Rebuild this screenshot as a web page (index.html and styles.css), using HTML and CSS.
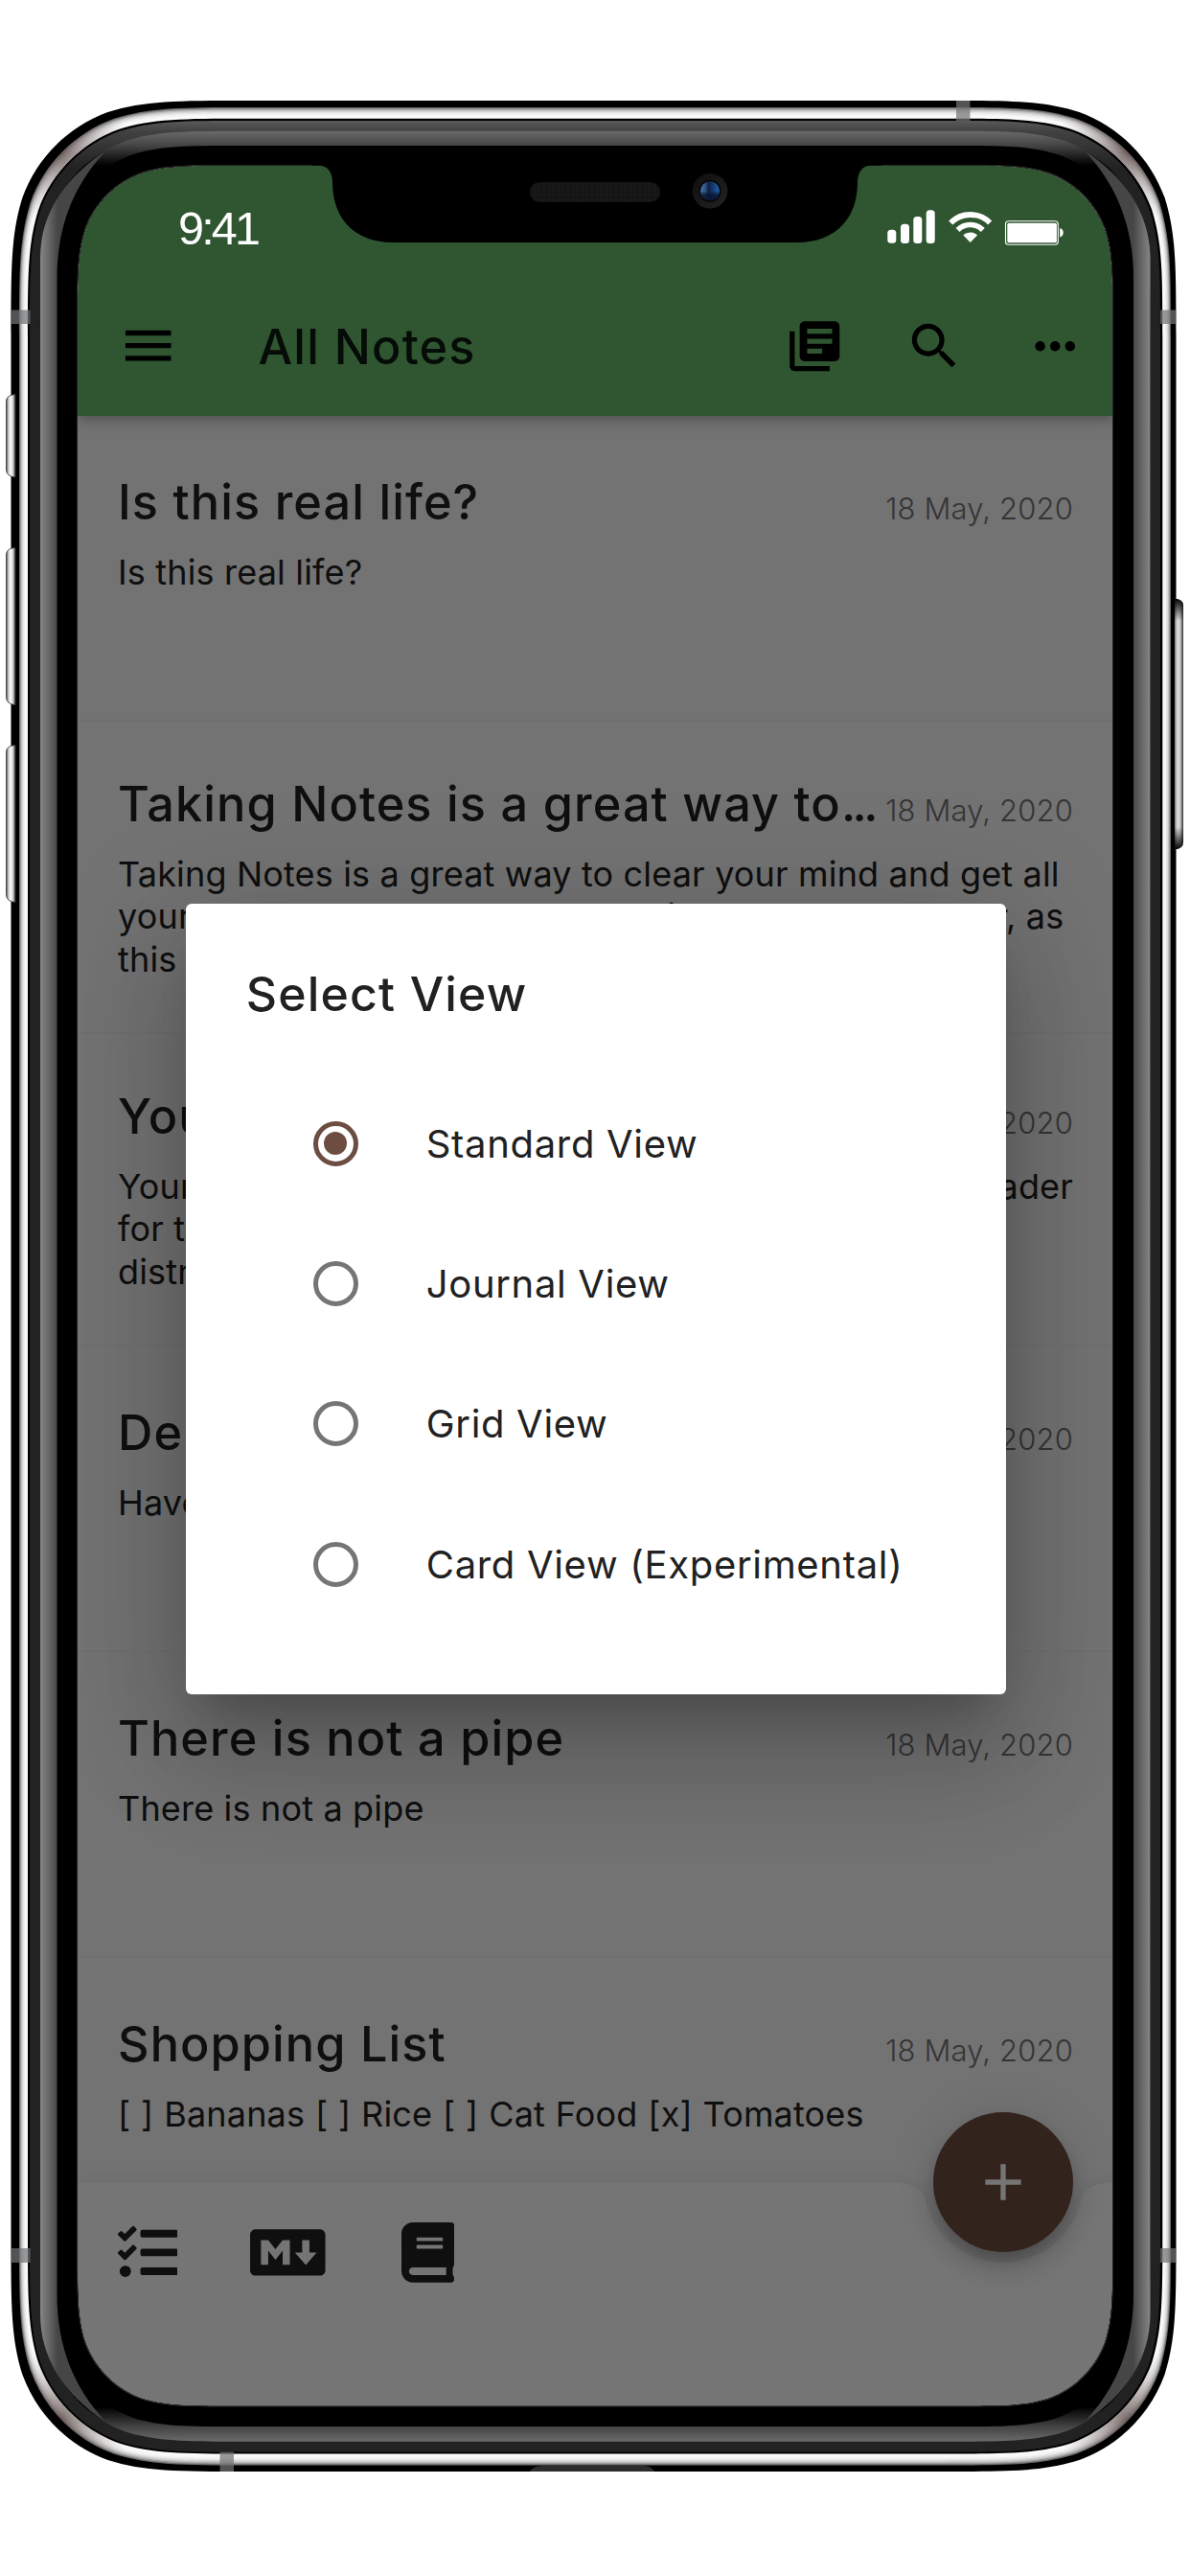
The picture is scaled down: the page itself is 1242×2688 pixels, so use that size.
FILE: index.html
```html
<!DOCTYPE html>
<html lang="en">
<head>
<meta charset="utf-8">
<title>All Notes</title>
<link rel="stylesheet" href="styles.css">
</head>
<body>
<div class="phone">
  <main class="screen">
    <header class="appbar">
      <div class="toolbar">
        <svg class="icon menu" viewBox="0 0 24 24"><path d="M3 18h18v-2H3v2zm0-5h18v-2H3v2zm0-7v2h18V6H3z"/></svg>
        <h1 class="heading">All Notes</h1>
        <svg class="icon" viewBox="0 0 24 24"><path d="M4 6H2v14c0 1.1.9 2 2 2h14v-2H4V6zm16-4H8c-1.1 0-2 .9-2 2v12c0 1.1.9 2 2 2h12c1.1 0 2-.9 2-2V4c0-1.1-.9-2-2-2zm-1 9H9V9h10v2zm-4 4H9v-2h6v2zm4-8H9V5h10v2z"/></svg>
        <svg class="icon" viewBox="0 0 24 24"><path d="M15.5 14h-.79l-.28-.27C15.41 12.59 16 11.11 16 9.5 16 5.91 13.09 3 9.5 3S3 5.91 3 9.5 5.91 16 9.5 16c1.61 0 3.09-.59 4.23-1.57l.27.28v.79l5 4.99L20.49 19l-4.99-5zm-6 0C7.01 14 5 11.99 5 9.5S7.01 5 9.5 5 14 7.01 14 9.5 11.99 14 9.5 14z"/></svg>
        <svg class="icon" viewBox="0 0 24 24"><path d="M6 10c-1.1 0-2 .9-2 2s.9 2 2 2 2-.9 2-2-.9-2-2-2zm12 0c-1.1 0-2 .9-2 2s.9 2 2 2 2-.9 2-2-.9-2-2-2zm-6 0c-1.1 0-2 .9-2 2s.9 2 2 2 2-.9 2-2-.9-2-2-2z"/></svg>
      </div>
    </header>
    <div class="notes">
      <article class="note">
        <div class="note-head"><h2 class="note-title">Is this real life?</h2><time class="date">18 May, 2020</time></div>
        <p class="note-body">Is this real life?</p>
      </article>
      <article class="note long">
        <div class="note-head"><h2 class="note-title">Taking Notes is a great way to<span class="dots">...</span></h2><time class="date">18 May, 2020</time></div>
        <p class="note-body">Taking Notes is a great way to clear your mind and get all<br>your thoughts down but as especially small goals over, as<br>this helps</p>
      </article>
      <article class="note long">
        <div class="note-head"><h2 class="note-title">Your Notes</h2><time class="date">18 May, 2020</time></div>
        <p class="note-body spread"><span>Your notes</span><span>reader</span></p>
        <p class="note-body tail">for the<br>distraction</p>
      </article>
      <article class="note">
        <div class="note-head"><h2 class="note-title">Demo</h2><time class="date">18 May, 2020</time></div>
        <p class="note-body">Have a day</p>
      </article>
      <article class="note">
        <div class="note-head"><h2 class="note-title">There is not a pipe</h2><time class="date">18 May, 2020</time></div>
        <p class="note-body">There is not a pipe</p>
      </article>
      <article class="note">
        <div class="note-head"><h2 class="note-title">Shopping List</h2><time class="date">18 May, 2020</time></div>
        <p class="note-body checklist">[ ] Bananas [ ] Rice [ ] Cat Food [x] Tomatoes</p>
      </article>
    </div>
    <footer class="bottombar">
      <svg class="bar-shape" viewBox="0 0 1081 234"><path d="M0 0H845C870 0 880 6 884 16A83.5 83.5 0 0 0 1048 16C1052 6 1062 0 1087 0V234H0Z"/></svg>
      <svg class="tool tool-list" viewBox="0 0 512 512"><path d="M139.61 35.5a12 12 0 0 0-17 0L58.93 98.81l-22.7-22.12a12 12 0 0 0-17 0L3.53 92.41a12 12 0 0 0 0 17l47.59 47.4a12.78 12.78 0 0 0 17.61 0l15.59-15.62L156.52 69a12.09 12.09 0 0 0 .09-17zm0 159.19a12 12 0 0 0-17 0l-63.68 63.72-22.7-22.1a12 12 0 0 0-17 0L3.53 252a12 12 0 0 0 0 17L51 316.5a12.77 12.77 0 0 0 17.6 0l15.7-15.69 72.2-72.22a12 12 0 0 0 .09-16.9zM64 368c-26.49 0-48.59 21.5-48.59 48S37.53 464 64 464a48 48 0 0 0 0-96zm432 16H208a16 16 0 0 0-16 16v32a16 16 0 0 0 16 16h288a16 16 0 0 0 16-16v-32a16 16 0 0 0-16-16zm0-320H208a16 16 0 0 0-16 16v32a16 16 0 0 0 16 16h288a16 16 0 0 0 16-16V80a16 16 0 0 0-16-16zm0 160H208a16 16 0 0 0-16 16v32a16 16 0 0 0 16 16h288a16 16 0 0 0 16-16v-32a16 16 0 0 0-16-16z"/></svg>
      <svg class="tool tool-md" viewBox="0 0 640 512"><path d="M593.8 59.1H46.2C20.7 59.1 0 79.8 0 105.2v301.5c0 25.5 20.7 46.2 46.2 46.2h547.7c25.5 0 46.2-20.7 46.1-46.1V105.2c0-25.4-20.7-46.1-46.2-46.1zM338.5 360.6H277v-120l-61.5 76.9-61.5-76.9v120H92.3V151.4h61.5l61.5 76.9 61.5-76.9h61.5v209.2zm135.3 3.1L381.5 256H443V151.4h61.5V256H566z"/></svg>
      <svg class="tool tool-book" viewBox="0 0 448 512"><path d="M448 360V24c0-13.3-10.7-24-24-24H96C43 0 0 43 0 96v320c0 53 43 96 96 96h328c13.3 0 24-10.7 24-24v-16c0-7.5-3.5-14.3-8.9-18.7-4.2-15.4-4.2-59.3 0-74.7 5.4-4.3 8.9-11.1 8.9-18.6zM128 134c0-3.3 2.7-6 6-6h212c3.3 0 6 2.7 6 6v20c0 3.3-2.7 6-6 6H134c-3.3 0-6-2.7-6-6v-20zm0 64c0-3.3 2.7-6 6-6h212c3.3 0 6 2.7 6 6v20c0 3.3-2.7 6-6 6H134c-3.3 0-6-2.7-6-6v-20zm253.4 250H96c-17.7 0-32-14.3-32-32 0-17.6 14.4-32 32-32h285.4c-1.9 17.1-1.9 46.9 0 64z"/></svg>
      <button class="fab" aria-label="New note"><svg viewBox="0 0 24 24"><path d="M19 13h-6v6h-2v-6H5v-2h6V5h2v6h6v2z"/></svg></button>
    </footer>

    <div class="scrim">
      <section class="dialog">
        <h2 class="dialog-title">Select View</h2>
        <ul class="options">
          <li class="option"><span class="radio on"></span>Standard View</li>
          <li class="option"><span class="radio"></span>Journal View</li>
          <li class="option"><span class="radio"></span>Grid View</li>
          <li class="option"><span class="radio"></span>Card View (Experimental)</li>
        </ul>
      </section>
    </div>

    <div class="status">
      <span class="clock">9:41</span>
      <svg class="status-icons" viewBox="0 0 190 50">
        <g fill="#fff">
          <rect x="5.3" y="29.7" width="9" height="14" rx="3.5"/>
          <rect x="19" y="23.7" width="9" height="20.3" rx="3.5"/>
          <rect x="32.3" y="16" width="9" height="28" rx="3.5"/>
          <rect x="45.7" y="9.3" width="9" height="34.7" rx="3.5"/>
          <path d="M91.7 43L84.2 35.2A11.5 11.5 0 0 1 99.2 35.2Z"/>
          <rect x="130.3" y="22.7" width="51.6" height="20.6" rx="1.5"/>
          <path d="M185.2 28q3.5 1 3.5 4.7t-3.5 4.7z"/>
        </g>
        <g fill="none" stroke="#fff">
          <path stroke-width="5.8" d="M71.2 22.5A29 29 0 0 1 112.2 22.5"/>
          <path stroke-width="5.6" d="M78.6 29.9A18.5 18.5 0 0 1 104.8 29.9"/>
          <rect x="128.5" y="20.8" width="54.8" height="24.4" rx="3" stroke-width="1.1"/>
        </g>
      </svg>
    </div>
  </main>

  <svg class="frame" viewBox="0 0 1242 2688">
    <defs>
      <linearGradient id="btnL"><stop offset="0" stop-color="#333"/><stop offset=".2" stop-color="#bbb"/><stop offset=".5" stop-color="#fff"/><stop offset=".8" stop-color="#bbb"/><stop offset="1" stop-color="#333"/></linearGradient>
      <linearGradient id="btnR"><stop offset="0" stop-color="#777"/><stop offset=".3" stop-color="#ddd"/><stop offset=".6" stop-color="#d0d0d0"/><stop offset=".85" stop-color="#777"/><stop offset="1" stop-color="#222"/></linearGradient>
      <linearGradient id="btnEnds" x1="0" y1="0" x2="0" y2="1"><stop offset="0" stop-color="#000"/><stop offset=".09" stop-color="#000" stop-opacity="0"/><stop offset=".91" stop-color="#000" stop-opacity="0"/><stop offset="1" stop-color="#000"/></linearGradient>
      <linearGradient id="lip" gradientUnits="userSpaceOnUse" x1="0" y1="126" x2="0" y2="175"><stop offset="0" stop-color="#5a5a5a"/><stop offset=".22" stop-color="#424242"/><stop offset="1" stop-color="#222"/></linearGradient>
      <linearGradient id="bezel" gradientUnits="userSpaceOnUse" x1="0" y1="136.7" x2="0" y2="2547.7"><stop offset="0" stop-color="#6a6a6a"/><stop offset=".0063" stop-color="#444"/><stop offset=".015" stop-color="#000"/><stop offset=".985" stop-color="#000"/><stop offset=".9937" stop-color="#444"/><stop offset="1" stop-color="#6a6a6a"/></linearGradient>
      <linearGradient id="side" gradientUnits="userSpaceOnUse" x1="42" y1="0" x2="60" y2="0"><stop offset="0" stop-color="#868686"/><stop offset="1" stop-color="#464646"/></linearGradient>
      <radialGradient id="tint"><stop offset="0" stop-color="#665654" stop-opacity=".85"/><stop offset="1" stop-color="#a09896" stop-opacity="0"/></radialGradient>
      <linearGradient id="lens"><stop offset="0" stop-color="#4675ad"/><stop offset=".25" stop-color="#2f5488"/><stop offset=".42" stop-color="#13213f"/><stop offset=".6" stop-color="#14336a"/><stop offset="1" stop-color="#1f66aa"/></linearGradient>
      <linearGradient id="lens-shade" x1="0" y1="0" x2="0" y2="1"><stop offset=".5" stop-color="#0b1330" stop-opacity="0"/><stop offset=".7" stop-color="#0b1330" stop-opacity=".8"/><stop offset="1" stop-color="#0b1330" stop-opacity=".9"/></linearGradient>
      <linearGradient id="lens-rim" x1="0" y1="0" x2="1" y2="1"><stop offset="0" stop-color="#0e0e0e"/><stop offset="1" stop-color="#232323"/></linearGradient>
      <pattern id="mesh" width="5" height="5" patternUnits="userSpaceOnUse"><rect width="5" height="5" fill="#181818"/><path d="M0 0H5M0 0V5" stroke="#0f0f0f"/></pattern>
      <path id="crescent" d="M42 270C42 225 66 186 110 158C78 192 59.5 235 59.5 290V2394.4C59.5 2449.4 78 2492.4 110 2526.4C66 2498.4 42 2459.4 42 2414.4Z"/>
      <clipPath id="metal"><path id="metal-shape" clip-rule="evenodd"/></clipPath>
    </defs>
    <g id="shell"></g>
    <use href="#crescent" fill="url(#side)"/>
    <use href="#crescent" fill="url(#side)" transform="matrix(-1 0 0 1 1242.5 0)"/>
    <g clip-path="url(#metal)" fill="url(#tint)">
      <ellipse cx="62" cy="158" rx="75" ry="75"/><ellipse cx="1178" cy="158" rx="75" ry="75"/>
      <ellipse cx="62" cy="2526" rx="75" ry="75"/><ellipse cx="1178" cy="2526" rx="75" ry="75"/>
    </g>
    <path d="M325 165V172.7H333C342 172.7 347 180 347 190C347 228 370 253 410 253H832C872 253 895 228 895 190C895 180 900 172.7 909 172.7H920V165Z"/>
    <rect x="553" y="190" width="136" height="21" rx="10.5" fill="url(#mesh)"/>
    <circle cx="741" cy="199.3" r="18.3" fill="url(#lens-rim)"/>
    <circle cx="741" cy="199.3" r="11.5" fill="#070707"/>
    <circle cx="741" cy="199.3" r="10" fill="url(#lens)"/>
    <circle cx="741" cy="199.3" r="10" fill="url(#lens-shade)"/>
    <g fill="#717375" fill-opacity=".72">
      <rect x="11.5" y="323.5" width="20" height="14.5"/><rect x="1211" y="323.5" width="16.5" height="14.5"/>
      <rect x="11.5" y="2346" width="20" height="15"/><rect x="1211" y="2346" width="16.5" height="15"/>
      <rect x="998" y="105" width="14.5" height="21"/><rect x="229.5" y="2558.5" width="14.5" height="20.5"/>
    </g>
    <path d="M553 2579Q556 2573 566 2573H672Q680 2573 683 2579Z" fill="#2c2c2c"/>
    <g stroke="#333" stroke-width=".8" fill="url(#btnL)">
      <path d="M16 411.5Q6.5 412 6.5 419V490Q6.5 497 16 498Z"/>
      <path d="M16 571.5Q6.5 572 6.5 579V727Q6.5 735 16 735.5Z"/>
      <path d="M16 777.5Q6.5 778 6.5 785V933Q6.5 941 16 941.5Z"/>
    </g>
    <path d="M1226 624.5Q1235 625 1235 632V878Q1235 886 1226 886.5Z" fill="url(#btnR)"/>
    <path d="M1226 624.5Q1235 625 1235 632V878Q1235 886 1226 886.5Z" fill="url(#btnEnds)"/>
  </svg>
</div>
<script src="frame.js"></script>
</body>
</html>
```
FILE: frame.js
```js
// Rounded rectangle with continuous-curvature corners.
function squircle(x0, y0, x1, y1, r) {
  const k = [1.52867, 1.0885, 0.86841, 0.63149, 0.37282, 0.16906, 0.07491].map(v => v * r);
  const corner = (cx, cy, sx, sy, flip) => {
    const side = [[0, k[1]], [0, k[2]], [k[6], k[3]], [k[5], k[4]], [k[4], k[5]], [k[3], k[6]], [k[2], 0], [k[1], 0], [k[0], 0]];
    const far = [[k[1], 0], [k[2], 0], [k[3], k[6]], [k[4], k[5]], [k[5], k[4]], [k[6], k[3]], [0, k[2]], [0, k[1]], [0, k[0]]];
    const p = (flip ? far : side).map(([a, b]) => (cx + sx * a).toFixed(2) + ' ' + (cy + sy * b).toFixed(2));
    return `C${p[0]} ${p[1]} ${p[2]}C${p[3]} ${p[4]} ${p[5]}C${p[6]} ${p[7]} ${p[8]}`;
  };
  // Right and bottom-left corners are walked in the direction of travel.
  return `M${x0} ${y0 + k[0]}` + corner(x0, y0, 1, 1, false) +
    `L${x1 - k[0]} ${y0}` + corner(x1, y0, -1, 1, true) +
    `L${x1} ${y1 - k[0]}` + corner(x1, y1, -1, -1, false) +
    `L${x0 + k[0]} ${y1}` + corner(x0, y1, 1, -1, true) + 'Z';
}
const shell = document.getElementById('shell');
function layer(d, fill) {
  const p = document.createElementNS('http://www.w3.org/2000/svg', 'path');
  p.setAttribute('d', d);
  p.setAttribute('fill', fill);
  p.setAttribute('fill-rule', 'evenodd');
  shell.appendChild(p);
}
const hole = squircle(81, 172.7, 1161.3, 2510.7, 106);
layer(squircle(11.5, 105, 1227.5, 2579, 160) + hole, '#000');
const steps = ['#6c6c6c', '#9a9a9a', '#bdbdbd', '#d4d4d4', '#e4e4e4', '#efefef', '#f6f6f6', '#fafafa'];
steps.forEach((c, i) => {
  const t = i / steps.length * 0.85;
  layer(squircle(20 + 9 * t, 112 + 11.7 * t, 1222 - 8.7 * t, 2572.5 - 12 * t, 157 - 7 * t) + hole, c);
});
layer(squircle(29, 123.7, 1213.3, 2560.5, 150) + hole, '#000');
layer(squircle(31, 126, 1211, 2558.5, 148) + hole, 'url(#lip)');
layer(squircle(42, 136.7, 1200.5, 2547.7, 140) + hole, 'url(#bezel)');
layer(squircle(59.3, 152, 1183.2, 2532, 125) + hole, '#000');
layer(squircle(80.3, 172, 1162, 2511.4, 106) + hole, '#333');
document.getElementById('metal-shape').setAttribute('d',
  squircle(20, 112, 1222, 2572.5, 157) + squircle(29, 123.7, 1213.3, 2560.5, 150));
```
FILE: styles.css
```css
* { box-sizing: border-box; margin: 0; padding: 0; }
body { background: #fff; font-family: Inter, "Liberation Sans", sans-serif; color: #212121; }
.phone { position: relative; width: 1242px; height: 2688px; padding: 173px 80px 177px 81px; overflow: hidden; }
.screen { position: relative; display: flex; flex-direction: column; height: 2338px; background: #fafafa; border-radius: 90px; overflow: hidden; }

.appbar { position: relative; flex: none; height: 261px; padding-top: 115px; background: #66bb6a; box-shadow: 0 3px 14px rgba(0,0,0,.35); }
.toolbar { display: flex; align-items: center; height: 146px; padding-left: 41.5px; padding-right: 30px; }
.icon { flex: none; width: 62.5px; height: 62.5px; margin-left: 62.8px; fill: #000; }
.icon.menu { width: 63.4px; height: 63.4px; margin-left: 0; }
.heading { flex: 1; margin-left: 83.5px; font-size: 50.4px; font-weight: 500; letter-spacing: 1.2px; color: rgba(0,0,0,.87); }

.notes { flex: 1; min-height: 0; overflow: hidden; }
.note { height: 319px; padding: 60px 42px 0; border-bottom: 2px solid #f5f5f5; }
.note.long { height: 326px; padding-top: 56px; }
.note-head { display: flex; justify-content: space-between; align-items: baseline; height: 60px; white-space: nowrap; }
.note-title { font-size: 50.4px; line-height: 60px; font-weight: 500; letter-spacing: 1.08px; }
.dots { letter-spacing: -3.6px; }
.date { font-size: 31px; line-height: 40px; font-weight: 350; color: #757575; letter-spacing: .15px; }
.note-body { margin-top: 21px; font-size: 36px; line-height: 44.4px; letter-spacing: .17px; white-space: nowrap; }
.checklist { word-spacing: .5px; }
.spread { display: flex; justify-content: space-between; }
.tail { margin-top: 0; }

.bottombar { position: relative; flex: none; display: flex; align-items: flex-start; height: 234px; padding: 41.8px 0 0 41.5px; }
.bar-shape { position: absolute; inset: 0; width: 1081px; height: 234px; fill: #fff; filter: drop-shadow(0 -2px 8px rgba(0,0,0,.07)); overflow: visible; }
.tool { position: relative; height: 62.8px; fill: #212121; }
.tool-list { width: 62.8px; }
.tool-md { width: 78.6px; margin-left: 75.7px; }
.tool-book { width: 55px; margin-left: 79.4px; }
.fab { position: absolute; left: 893px; top: -73px; width: 146px; height: 146px; display: grid; place-items: center; border: 0; border-radius: 50%; background: #6d4c41; box-shadow: 0 9px 14px -3px rgba(0,0,0,.2), 0 17px 29px rgba(0,0,0,.14), 0 3px 52px rgba(0,0,0,.12); }
.fab svg { width: 64px; height: 64px; fill: #fff; }

.scrim { position: absolute; inset: 0; display: flex; justify-content: center; align-items: flex-start; padding-top: 770px; background: rgba(0,0,0,.54); }
.dialog { width: 856.5px; height: 824.5px; margin-left: 1px; border-radius: 6px; background: #fff; padding: 64px 63px 0; box-shadow: 0 32px 43px -20px rgba(0,0,0,.2), 0 69px 109px 9px rgba(0,0,0,.14), 0 26px 132px 23px rgba(0,0,0,.12); }
.dialog-title { font-size: 50px; line-height: 60px; font-weight: 500; letter-spacing: 1.15px; }
.options { list-style: none; margin-top: 53px; }
.option { display: flex; align-items: center; height: 146.3px; padding-left: 70px; font-size: 40px; letter-spacing: .68px; white-space: nowrap; }
.radio { display: grid; place-items: center; width: 47px; height: 47px; margin-right: 71px; border: 5.5px solid #757575; border-radius: 50%; }
.radio.on { border-color: #6d4c41; }
.radio.on::after { content: ""; width: 24px; height: 24px; border-radius: 50%; background: #6d4c41; }

.status { position: absolute; top: 37px; left: 105px; right: 51px; display: flex; justify-content: space-between; height: 60px; }
.clock { font-family: "Liberation Sans", Arial, sans-serif; font-size: 48.5px; line-height: 57px; letter-spacing: -2.8px; color: #fff; }
.status-icons { width: 190px; height: 50px; }
.frame { position: absolute; left: 0; top: 0; width: 1242px; height: 2688px; pointer-events: none; }
```
